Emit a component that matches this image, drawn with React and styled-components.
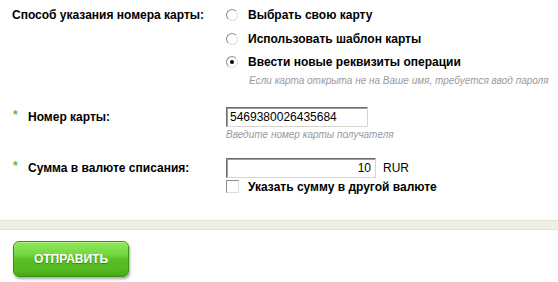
import React, { useState } from "react";
import styled, { createGlobalStyle } from "styled-components";

const Global = createGlobalStyle`
  html, body { margin: 0; padding: 0; background: #fff; }
  body { font-family: "Liberation Sans", Arial, sans-serif; font-size: 12px; color: #000; }
`;

const Page = styled.div`
  width: 558px;
  height: 282px;
  overflow: hidden;
  padding-top: 3px;
  box-sizing: border-box;
`;

const Form = styled.div`
  padding-left: 12px;
  display: flex;
  flex-direction: column;
`;

const Row = styled.div`
  display: grid;
  grid-template-columns: 214px 1fr;
  margin-top: ${(p) => p.$mt || 0}px;
`;

const Label = styled.div`
  font-weight: bold;
  height: ${(p) => p.$h}px;
  display: flex;
  align-items: center;
  position: relative;
  padding-left: ${(p) => (p.$req ? 16 : 0)}px;
`;

const Star = styled.span`
  position: absolute;
  left: 1px;
  top: 1px;
  color: #5cbc4a;
  font-weight: bold;
  font-size: 12px;
`;

const Col = styled.div`
  display: flex;
  flex-direction: column;
`;

const Option = styled.label`
  height: ${(p) => p.$h}px;
  display: flex;
  align-items: center;
  font-weight: bold;
  gap: 10px;
  cursor: pointer;
`;

const Radio = styled.span`
  width: 12px;
  height: 12px;
  box-sizing: border-box;
  border-radius: 50%;
  border: 1px solid;
  border-color: #8a8a8a #e0ddd6 #e0ddd6 #8a8a8a;
  background: #fff;
  display: flex;
  align-items: center;
  justify-content: center;
  flex: none;
  &::after {
    content: "";
    width: 4px;
    height: 4px;
    border-radius: 50%;
    background: ${(p) => (p.$on ? "#000" : "transparent")};
  }
`;

const Hint = styled.div`
  font-style: italic;
  font-size: 10px;
  line-height: 13px;
  color: #9a9a9a;
  white-space: nowrap;
  padding-left: ${(p) => p.$pl || 0}px;
  margin-top: ${(p) => p.$mt || 0}px;
`;

const Input = styled.input`
  width: ${(p) => p.$w}px;
  height: 20px;
  box-sizing: border-box;
  border: 1px solid;
  border-color: #6e6e6e #d6d3cc #d6d3cc #6e6e6e;
  box-shadow: inset 1px 1px 0 #9e9e9e;
  padding: 0 4px 0 3px;
  font-family: "Liberation Sans", Arial, sans-serif;
  font-size: 12px;
  color: #000;
  text-align: ${(p) => p.$align || "left"};
  outline: none;
  margin: 0;
`;

const InputLine = styled.div`
  display: flex;
  align-items: center;
  gap: 7px;
  height: 20px;
`;

const CheckRow = styled.label`
  display: flex;
  align-items: center;
  gap: 9px;
  height: 17px;
  font-weight: bold;
`;

const Box = styled.span`
  width: 13px;
  height: 13px;
  box-sizing: border-box;
  border: 1px solid;
  border-color: #8a8a8a #e0ddd6 #e0ddd6 #8a8a8a;
  background: #fff;
  flex: none;
`;

const Divider = styled.div`
  margin-top: 25px;
  height: 10px;
  box-sizing: border-box;
  background: #f1eee8;
  border-top: 1px solid #e4e0d8;
  border-bottom: 1px solid #e4e0d8;
`;

const Footer = styled.div`
  padding: 11px 0 0 13px;
`;

const Submit = styled.button`
  width: 116px;
  height: 36px;
  box-sizing: border-box;
  border: 1px solid #3a9410;
  border-radius: 6px;
  background: linear-gradient(
    to bottom,
    #8fe85a 0%,
    #78d844 35%,
    #58c022 52%,
    #55bb22 80%,
    #48a818 100%
  );
  box-shadow: inset 0 1px 0 #b0f382, 1px 2px 3px rgba(0, 0, 0, 0.35);
  color: #fff;
  font-family: "Liberation Sans", Arial, sans-serif;
  font-weight: bold;
  font-size: 12px;
  text-shadow: 0 1px 1px rgba(30, 90, 0, 0.6);
  cursor: pointer;
  padding: 0;
`;

export default function App() {
  const [sel, setSel] = useState(2);
  const options = ["Выбрать свою карту", "Использовать шаблон карты", "Ввести новые реквизиты операции"];
  const heights = [24, 23.5, 23.5];
  return (
    <Page>
      <Global />
      <Form>
        <Row>
          <Label $h={24}>Способ указания номера карты:</Label>
          <Col>
            {options.map((o, i) => (
              <Option key={o} $h={heights[i]} onClick={() => setSel(i)}>
                <Radio $on={sel === i} />
                {o}
              </Option>
            ))}
            <Hint $pl={23}>Если карта открыта не на Ваше имя, требуется ввод пароля</Hint>
          </Col>
        </Row>
        <Row $mt={20}>
          <Label $h={20} $req>
            <Star>*</Star>Номер карты:
          </Label>
          <Col>
            <InputLine>
              <Input $w={142} defaultValue="5469380026435684" />
            </InputLine>
            <Hint $mt={1}>Введите номер карты получателя</Hint>
          </Col>
        </Row>
        <Row $mt={17}>
          <Label $h={20} $req>
            <Star>*</Star>Сумма в валюте списания:
          </Label>
          <Col>
            <InputLine>
              <Input $w={150} $align="right" defaultValue="10" />
              <span>RUR</span>
            </InputLine>
            <CheckRow>
              <Box />
              Указать сумму в другой валюте
            </CheckRow>
          </Col>
        </Row>
      </Form>
      <Divider />
      <Footer>
        <Submit>ОТПРАВИТЬ</Submit>
      </Footer>
    </Page>
  );
}
